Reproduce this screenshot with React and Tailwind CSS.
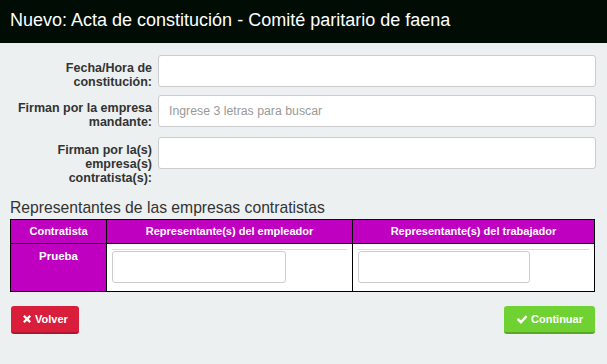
import React from "react";

const font = { fontFamily: '"Liberation Sans", Arial, sans-serif' };

function XIcon() {
  return (
    <svg width="8" height="8" viewBox="0 0 10 10" className="mr-[4px]">
      <path d="M2 2 L8 8 M8 2 L2 8" stroke="white" strokeWidth="2.8" strokeLinecap="square" />
    </svg>
  );
}

function CheckIcon() {
  return (
    <svg width="10" height="9" viewBox="0 0 11 10" className="mr-[4px]">
      <path d="M1.5 5.2 L4.3 8 L9.7 2.2" stroke="white" strokeWidth="2.8" fill="none" strokeLinecap="square" />
    </svg>
  );
}

function Row({ label, children, className = "" }) {
  return (
    <div className={"flex items-start " + className}>
      <div className="w-[158px] shrink-0 pl-[10px] pr-[6px] pt-[6px] text-right text-[12.5px] font-bold leading-[14px] text-[#333]">
        {label}
      </div>
      <div className="flex-1 pr-[11px]">{children}</div>
    </div>
  );
}

export default function App() {
  return (
    <div style={font} className="w-[607px] h-[364px] bg-[#ecf0f1] overflow-hidden">
      <div className="h-[43px] bg-[#010d04] pl-[10px] text-white text-[18px] leading-[40px]">
        Nuevo: Acta de constitución - Comité paritario de faena
      </div>
      <div className="pt-[12px]">
        <Row label={<>Fecha/Hora de<br />constitución:</>} className="mb-[6px]">
          <input className="block w-full h-[32px] bg-white border border-[#ccc] rounded-[3px]" />
        </Row>
        <Row label={<>Firman por la empresa<br />mandante:</>} className="mb-[8px]">
          <input
            placeholder="Ingrese 3 letras para buscar"
            className="block w-full h-[32px] bg-white border border-[#ccc] rounded-[3px] px-[10px] text-[12.3px] placeholder:text-[#999] outline-none"
          />
        </Row>
        <Row label={<>Firman por la(s)<br />empresa(s)<br />contratista(s):</>}>
          <input className="block w-full h-[32px] bg-white border border-[#ccc] rounded-[3px]" />
        </Row>
      </div>
      <div className="px-[10px]">
        <div className="mt-[14px] mb-[2px] text-[15.7px] leading-[18px] text-[#333]">
          Representantes de las empresas contratistas
        </div>
        <table className="w-[585px] border-collapse border border-black text-[11px]">
          <thead>
            <tr className="h-[24px] bg-[#c000c0] text-white font-bold">
              <th className="w-[96px] border border-black font-bold">Contratista</th>
              <th className="w-[246px] border border-black font-bold">Representante(s) del empleador</th>
              <th className="border border-black font-bold">Representante(s) del trabajador</th>
            </tr>
          </thead>
          <tbody>
            <tr className="h-[48px]">
              <td className="bg-[#c000c0] border border-black text-white font-bold text-center align-top pt-[5px] leading-[14px] text-[11.5px]">
                Prueba
              </td>
              <td className="bg-white border border-black align-top px-[5px] pt-[5px] pb-[8px]">
                <div className="border-t border-[#ddd]">
                  <input className="block w-[174px] h-[32px] mt-[1px] bg-white border border-[#ccc] rounded-[3px]" />
                </div>
              </td>
              <td className="bg-white border border-black align-top px-[5px] pt-[5px] pb-[8px]">
                <div className="border-t border-[#ddd]">
                  <input className="block w-[172px] h-[32px] mt-[1px] bg-white border border-[#ccc] rounded-[3px]" />
                </div>
              </td>
            </tr>
          </tbody>
        </table>
        <div className="mt-[14px] flex justify-between pl-[1px] pr-[2px]">
          <button className="flex items-center h-[28px] pl-[12px] pr-[11px] bg-[#d91e3c] border-b-2 border-[#b3152f] rounded-[3px] text-white text-[11px] font-bold">
            <XIcon />
            Volver
          </button>
          <button className="flex items-center h-[28px] pl-[13px] pr-[12px] bg-[#6fd132] border-b-2 border-[#58a826] rounded-[3px] text-white text-[11px] font-bold">
            <CheckIcon />
            Continuar
          </button>
        </div>
      </div>
    </div>
  );
}
